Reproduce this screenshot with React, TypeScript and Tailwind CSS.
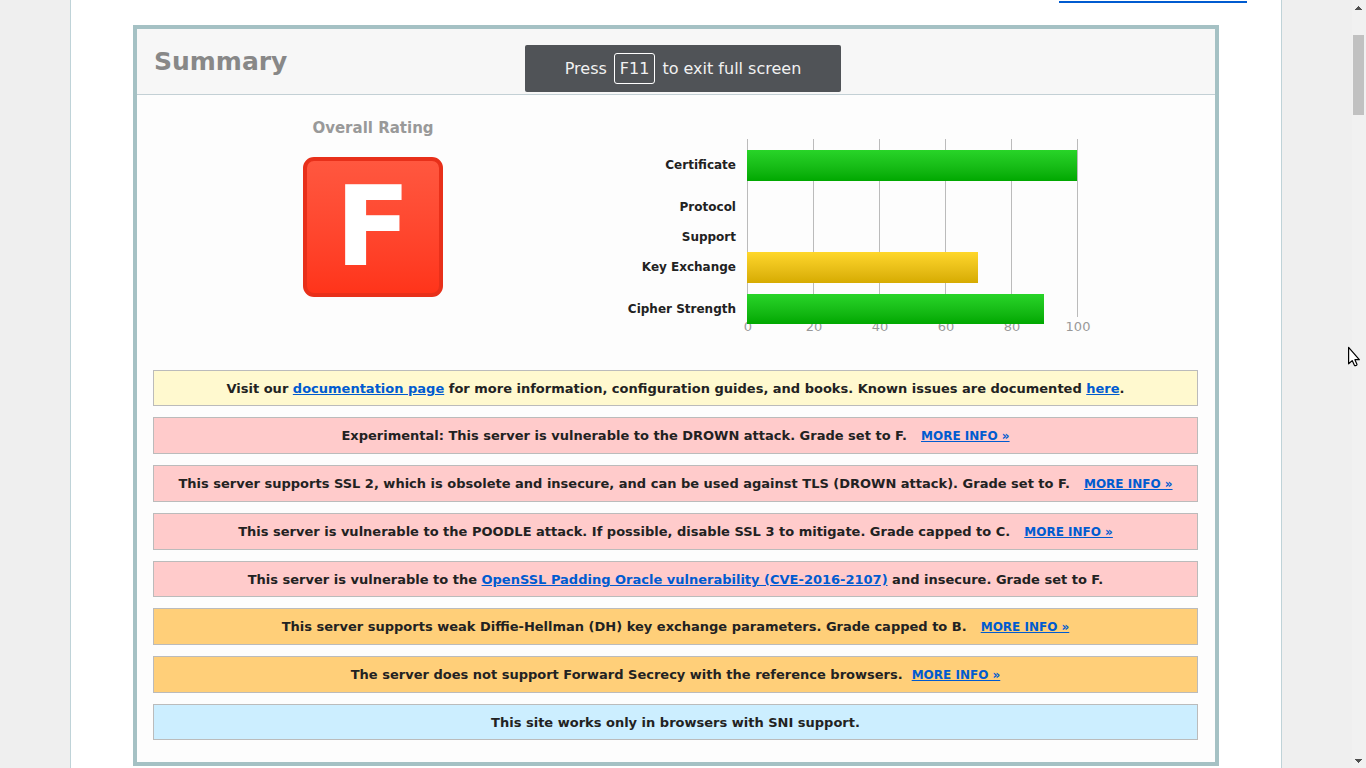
import React from "react";

type Tone = "note" | "error" | "warning" | "info";

const toneClass: Record<Tone, string> = {
  note: "bg-[#fff9cf]",
  error: "bg-[#ffcbcb]",
  warning: "bg-[#ffcf79]",
  info: "bg-[#cceeff]",
};

const linkClass = "text-[#005bd0] underline";

function Alert({ tone, more, children }: { tone: Tone; more?: "near" | "far"; children: React.ReactNode }) {
  return (
    <div
      className={`border border-[#bbbbbb] px-2 text-center text-[13px] leading-[17px] font-bold ${
        more ? "pt-[9px] pb-[9px]" : "pt-[9px] pb-2"
      } ${toneClass[tone]}`}
    >
      {children}
      {more && (
        <a href="#more" className={`text-xs leading-none ${linkClass} ${more === "far" ? "ml-[14px]" : "ml-[9px]"}`}>
          MORE INFO »
        </a>
      )}
    </div>
  );
}

const green = "bg-linear-to-b from-[#28d428] to-[#00a800]";
const yellow = "bg-linear-to-b from-[#ffd72a] to-[#d6ab00]";

const ratings = [
  { label: ["Certificate"], value: 100, row: "h-[31px] mb-[11px]", fill: green },
  { label: ["Protocol", "Support"], value: 0, row: "h-[60px]", fill: green },
  { label: ["Key Exchange"], value: 70, row: "h-[31px] mb-[11px]", fill: yellow },
  { label: ["Cipher Strength"], value: 90, row: "h-[30px]", fill: green },
];

function Chart() {
  return (
    <div className="flex gap-[11px]">
      <div className="w-[143px] pt-[11px] text-right text-xs font-bold">
        {ratings.map((r) => (
          <div key={r.label[0]} className={r.row}>
            {r.label.map((line) => (
              <div key={line} className="leading-[30px]">{line}</div>
            ))}
          </div>
        ))}
      </div>
      <div className="grid w-[331px]">
        <div className="col-start-1 row-start-1 flex justify-between">
          {[0, 20, 40, 60, 80, 100].map((tick) => (
            <div key={tick} className="flex w-px flex-col items-center">
              <div className="h-[178px] w-px bg-[#bbbbbb]" />
              <span className="pl-px text-[13px] leading-5 text-[#999999]">{tick}</span>
            </div>
          ))}
        </div>
        <div className="z-10 col-start-1 row-start-1 mr-px pt-[11px]">
          {ratings.map((r) => (
            <div key={r.label[0]} className={r.row}>
              <div className={`h-full ${r.fill}`} style={{ width: `${r.value}%` }} />
            </div>
          ))}
        </div>
      </div>
    </div>
  );
}

function Scrollbar() {
  return (
    <div className="sticky top-0 flex h-screen w-[14px] shrink-0 flex-col items-center justify-between bg-[#f1f1f1] pt-[6px] pr-px pb-[5px]">
      <div className="flex flex-col items-center gap-[25px]">
        <svg width="7" height="4" viewBox="0 0 7 4" fill="#505050" shapeRendering="crispEdges">
          <path d="M3 0h1v1h1v1h1v1h1v1H0V3h1V2h1V1h1z" />
        </svg>
        <div className="h-20 w-[11px] bg-[#c1c1c1]" />
      </div>
      <svg width="7" height="4" viewBox="0 0 7 4" fill="#505050" shapeRendering="crispEdges">
        <path d="M0 0h7v1H6v1H5v1H4v1H3V3H2V2H1V1H0z" />
      </svg>
    </div>
  );
}

export default function App() {
  return (
    <div className="flex min-h-screen bg-[#efefef] font-['DejaVu_Sans',sans-serif] text-[#222222]">
      <div className="flex min-w-0 flex-1 justify-center">
        <main className="w-full max-w-[1212px] border-x border-[#bfd3d8] bg-white px-[62px]">
          <div className="-mr-7 flex h-[25px] justify-end pt-px">
            <a href="#scan" aria-label="Scan another" className="h-[2px] w-[188px] bg-[#005bd0]" />
          </div>
          <section className="border-4 border-[#a5c1c4] bg-[#fdfdfd]">
            <h1 className="border-b border-[#c3d0d5] bg-[#f7f7f7] pt-[17px] pb-4 pl-[17px] text-[25px] leading-8 font-bold text-[#888888]">
              Summary
            </h1>
            <div className="flex h-[275px] px-4">
              <div className="flex w-[440px] flex-col items-center pt-[23px]">
                <h2 className="text-[15px] leading-5 font-bold text-[#999999]">Overall Rating</h2>
                <div className="mt-[19px] h-[140px] w-[140px] rounded-[11px] border-4 border-[#e8301a] bg-linear-to-b from-[#ff573f] to-[#ff341a] text-center text-[111px] leading-[132px] font-bold text-white">
                  F
                </div>
              </div>
              <div className="pt-11">
                <Chart />
              </div>
            </div>
            <div className="flex flex-col gap-[11px] pr-[17px] pb-[22px] pl-4">
              <Alert tone="note">
                Visit our <a href="#docs" className={linkClass}>documentation page</a> for more information,
                configuration guides, and books. Known issues are documented{" "}
                <a href="#issues" className={linkClass}>here</a>.
              </Alert>
              <Alert tone="error" more="far">
                Experimental: This server is vulnerable to the DROWN attack. Grade set to F.
              </Alert>
              <Alert tone="error" more="far">
                This server supports SSL 2, which is obsolete and insecure, and can be used against TLS (DROWN attack).
                Grade set to F.
              </Alert>
              <Alert tone="error" more="far">
                This server is vulnerable to the POODLE attack. If possible, disable SSL 3 to mitigate. Grade capped to C.
              </Alert>
              <Alert tone="error">
                This server is vulnerable to the{" "}
                <a href="#cve" className={linkClass}>OpenSSL Padding Oracle vulnerability (CVE-2016-2107)</a> and
                insecure. Grade set to F.
              </Alert>
              <Alert tone="warning" more="far">
                This server supports weak Diffie-Hellman (DH) key exchange parameters. Grade capped to B.
              </Alert>
              <Alert tone="warning" more="near">
                The server does not support Forward Secrecy with the reference browsers.
              </Alert>
              <Alert tone="info">This site works only in browsers with SNI support.</Alert>
            </div>
          </section>
        </main>
      </div>
      <Scrollbar />

      <div className="fixed top-[45px] left-1/2 z-20 flex h-[47px] w-[316px] -translate-x-1/2 items-center justify-center rounded-xs bg-[#505357] text-base leading-[21px] text-[#f1f1f1]">
        Press
        <kbd className="mx-[7px] rounded-[3px] border border-white px-[5px] py-1 font-['DejaVu_Sans',sans-serif]">F11</kbd>
        to exit full screen
      </div>

      <svg className="fixed top-[346px] left-[1348px] z-30" width="14" height="22" viewBox="0 0 14 22">
        <path
          d="M.6 1.4v16.4l3.6-3.2 2.2 4.6c.6 1.1 3 .2 2.5-1l-2-4.5h4.4z"
          fill="#ffffff"
          stroke="#000000"
          strokeWidth="1.2"
          strokeLinejoin="round"
        />
      </svg>
    </div>
  );
}
